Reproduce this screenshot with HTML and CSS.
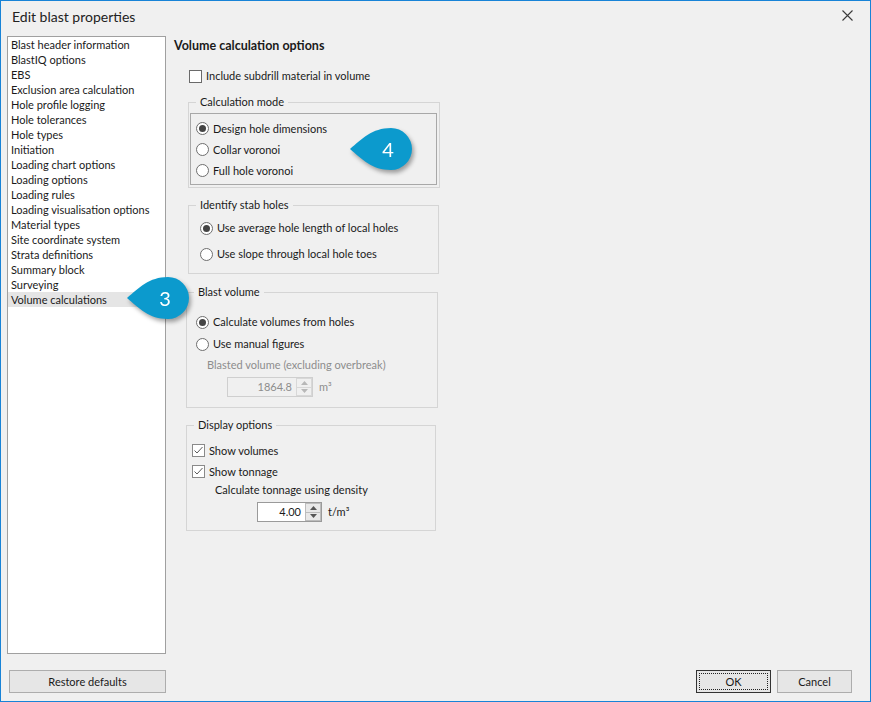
FILE: index.html
```html
<!DOCTYPE html>
<html lang="en">
<head>
    <meta charset="UTF-8">
    <title>Edit blast properties</title>
    <link rel="stylesheet" href="styles.css">
</head>
<body>
<div class="window">
    <header class="titlebar">
        <span class="title">Edit blast properties</span>
        <svg class="close-icon" width="11" height="11" viewBox="0 0 11 11">
            <path d="M0.5 0.5L10.5 10.5M10.5 0.5L0.5 10.5" stroke="#3a3a3a" stroke-width="1.1" fill="none"/>
        </svg>
    </header>

    <div class="layout">
        <!-- Property pages -->
        <ul class="nav-list">
            <li>Blast header information</li>
            <li>BlastIQ options</li>
            <li>EBS</li>
            <li>Exclusion area calculation</li>
            <li>Hole profile logging</li>
            <li>Hole tolerances</li>
            <li>Hole types</li>
            <li>Initiation</li>
            <li>Loading chart options</li>
            <li>Loading options</li>
            <li>Loading rules</li>
            <li>Loading visualisation options</li>
            <li>Material types</li>
            <li>Site coordinate system</li>
            <li>Strata definitions</li>
            <li>Summary block</li>
            <li>Surveying</li>
            <li class="selected">Volume calculations</li>
        </ul>

        <!-- Volume calculations page -->
        <section class="panel">
            <h2 class="panel-title">Volume calculation options</h2>

            <label class="option option-top"><span class="check"></span>Include subdrill material in volume</label>

            <fieldset class="group group-calc">
                <legend>Calculation mode</legend>
                <div class="group-body">
                    <div class="inner-panel">
                        <label class="option row-21"><span class="radio is-on"></span>Design hole dimensions</label>
                        <label class="option row-21"><span class="radio"></span>Collar voronoi</label>
                        <label class="option row-21"><span class="radio"></span>Full hole voronoi</label>
                    </div>
                </div>
            </fieldset>

            <fieldset class="group group-stab">
                <legend>Identify stab holes</legend>
                <div class="group-body">
                    <label class="option row-26"><span class="radio is-on"></span>Use average hole length of local holes</label>
                    <label class="option row-26"><span class="radio"></span>Use slope through local hole toes</label>
                </div>
            </fieldset>

            <fieldset class="group group-volume">
                <legend>Blast volume</legend>
                <div class="group-body">
                    <label class="option row-22"><span class="radio is-on"></span>Calculate volumes from holes</label>
                    <label class="option row-22"><span class="radio"></span>Use manual figures</label>
                    <div class="field-label is-disabled">Blasted volume (excluding overbreak)</div>
                    <div class="spin-row spin-row-volume">
                        <div class="spin is-disabled">
                            <span class="spin-value">1864.8</span>
                            <span class="spin-buttons">
                                <span class="spin-btn"><svg width="7" height="4" viewBox="0 0 7 4"><path d="M0 4L3.5 0L7 4Z"/></svg></span>
                                <span class="spin-btn"><svg width="7" height="4" viewBox="0 0 7 4"><path d="M0 0L3.5 4L7 0Z"/></svg></span>
                            </span>
                        </div>
                        <span class="unit is-disabled">m³</span>
                    </div>
                </div>
            </fieldset>

            <fieldset class="group group-display">
                <legend>Display options</legend>
                <div class="group-body">
                    <label class="option row-21"><span class="check is-on"><svg width="11" height="11" viewBox="0 0 11 11"><path d="M1.5 5.5L4 8L9.5 2" stroke="#5a5a5a" stroke-width="1" fill="none"/></svg></span>Show volumes</label>
                    <label class="option row-21"><span class="check is-on"><svg width="11" height="11" viewBox="0 0 11 11"><path d="M1.5 5.5L4 8L9.5 2" stroke="#5a5a5a" stroke-width="1" fill="none"/></svg></span>Show tonnage</label>
                    <div class="field-label field-density">Calculate tonnage using density</div>
                    <div class="spin-row spin-row-density">
                        <div class="spin spin-density">
                            <span class="spin-value">4.00</span>
                            <span class="spin-buttons">
                                <span class="spin-btn"><svg width="7" height="4" viewBox="0 0 7 4"><path d="M0 4L3.5 0L7 4Z"/></svg></span>
                                <span class="spin-btn"><svg width="7" height="4" viewBox="0 0 7 4"><path d="M0 0L3.5 4L7 0Z"/></svg></span>
                            </span>
                        </div>
                        <span class="unit">t/m³</span>
                    </div>
                </div>
            </fieldset>
        </section>

        <button class="btn btn-restore" type="button">Restore defaults</button>
        <div class="actions">
            <button class="btn btn-default" type="button">OK</button>
            <button class="btn" type="button">Cancel</button>
        </div>
    </div>

    <!-- Step callouts -->
    <div class="callout callout-3">
        <svg width="62" height="42" viewBox="0 0 62 42"><path d="M0 21C12 11 22 0 41 0A21 21 0 0 1 41 42C22 42 12 31 0 21Z"/></svg>
        <span class="callout-num">3</span>
    </div>
    <div class="callout callout-4">
        <svg width="62" height="42" viewBox="0 0 62 42"><path d="M0 21C12 11 22 0 41 0A21 21 0 0 1 41 42C22 42 12 31 0 21Z"/></svg>
        <span class="callout-num">4</span>
    </div>
</div>
</body>
</html>
```

FILE: styles.css
```css
/* Dialog window */
body {
    margin: 0;
    font-family: Lato, "Noto Sans", sans-serif;
    font-size: 11px;
    color: #1a1a1a;
}
.window {
    position: relative;
    width: 871px;
    height: 702px;
    box-sizing: border-box;
    border: 1px solid #1883d7;
    background-color: #f0f0f0;
    display: flex;
    flex-direction: column;
}
.titlebar {
    height: 35px;
    box-sizing: border-box;
    padding: 6px 0 0 11px;
    display: flex;
    justify-content: space-between;
}
.title {
    font-size: 14px;
    line-height: 20px;
    color: #222;
}
.close-icon {
    margin: 3px 17px 0 0;
}
.layout {
    flex: 1;
    display: grid;
    grid-template-columns: 159px 1fr;
    grid-template-rows: 618px 1fr;
    padding: 0 18px 8px 6px;
}

/* Left list */
.nav-list {
    list-style: none;
    margin: 0;
    padding: 0;
    border: 1px solid #a0a0a0;
    background-color: #fff;
}
.nav-list li {
    height: 15px;
    line-height: 15px;
    padding-left: 3px;
    white-space: nowrap;
}
.nav-list li.selected {
    background-color: #e5e5e5;
}

/* Right page */
.panel {
    padding: 2px 0 0 8px;
}
.panel-title {
    margin: 0;
    font-size: 12.5px;
    line-height: 16px;
    font-weight: bold;
}
.option {
    display: flex;
    align-items: center;
    gap: 4px;
    line-height: 16px;
    white-space: nowrap;
}
.option-top {
    margin: 14px 0 0 15px;
}
.row-21 { height: 21px; }
.row-22 { height: 22px; }
.row-26 { height: 26px; }

.check,
.radio {
    width: 13px;
    height: 13px;
    box-sizing: border-box;
    border: 1px solid #6a6a6a;
    background-color: #fff;
    flex: none;
    display: flex;
    align-items: center;
    justify-content: center;
}
.check.is-on {
    border-color: #8a8a8a;
}
.radio {
    border-radius: 50%;
    border-color: #6e6e6e;
}
.radio.is-on::after {
    content: "";
    width: 7px;
    height: 7px;
    border-radius: 50%;
    background-color: #444;
}

/* Group boxes */
.group {
    margin: 0;
    padding: 0;
    border: 1px solid #d5d5d5;
    box-sizing: border-box;
    min-width: 0;
}
.group legend {
    margin-left: 7px;
    padding: 0 4px;
    line-height: 16px;
}
.group-calc {
    margin: 10px 0 0 14px;
    width: 252px;
}
.group-calc .group-body {
    padding: 3px 2px 2px 1px;
}
.inner-panel {
    border: 1px solid #a8a8a8;
    padding: 4px 0 3px 5px;
}
.group-stab {
    margin: 9px 0 0 14px;
    width: 251px;
}
.group-stab .group-body {
    padding: 2px 0 6px 11px;
}
.group-volume {
    margin: 10px 0 0 12px;
    width: 252px;
}
.group-volume .group-body {
    padding: 11px 0 10px 9px;
}
.group-display {
    margin: 9px 0 0 12px;
    width: 250px;
}
.group-display .group-body {
    padding: 7px 0 8px 5px;
}

.field-label {
    height: 20px;
    line-height: 20px;
    margin-left: 11px;
}
.field-density {
    height: 16px;
    line-height: 16px;
    margin-left: 23px;
}
.is-disabled {
    color: #8d8d8d;
}

/* Numeric spin boxes */
.spin-row {
    display: flex;
    align-items: center;
    gap: 6px;
}
.spin-row-volume {
    margin: 2px 0 0 31px;
}
.spin-row-density {
    margin: 4px 0 0 65px;
}
.spin {
    width: 86px;
    height: 20px;
    box-sizing: border-box;
    border: 1px solid #9a9a9a;
    background-color: #fff;
    display: flex;
}
.spin.is-disabled {
    border-color: #cfcfcf;
    background-color: #f0f0f0;
}
.spin-density {
    width: 65px;
}
.spin-value {
    flex: 1;
    text-align: right;
    line-height: 18px;
    padding-right: 4px;
}
.spin-buttons {
    width: 16px;
    display: flex;
    flex-direction: column;
}
.spin-btn {
    flex: 1;
    display: flex;
    align-items: center;
    justify-content: center;
    border: 1px solid #bcbcbc;
    background-color: #e8e8e8;
}
.spin-btn + .spin-btn {
    border-top: none;
}
.spin-btn svg {
    fill: #555;
}
.spin.is-disabled .spin-btn {
    border-color: #d8d8d8;
    background-color: #f0f0f0;
}
.spin.is-disabled .spin-btn svg {
    fill: #b8b8b8;
}
.unit {
    line-height: 16px;
}

/* Buttons */
.btn {
    font-family: inherit;
    font-size: 11px;
    color: #1a1a1a;
    height: 23px;
    padding: 0;
    border: 1px solid #adadad;
    background-color: #e6e6e6;
}
.btn-restore {
    align-self: end;
    width: 157px;
    margin-left: 2px;
}
.actions {
    align-self: end;
    justify-self: end;
    display: flex;
    gap: 6px;
}
.actions .btn {
    width: 75px;
}
.btn-default {
    border-color: #333;
    outline: 1px dotted #222;
    outline-offset: -4px;
}

/* Callouts */
.callout {
    position: absolute;
    width: 62px;
    height: 42px;
    filter: drop-shadow(2px 3px 2px rgba(0, 0, 0, 0.35));
}
.callout svg {
    display: block;
    fill: #0c9acd;
}
.callout-num {
    position: absolute;
    left: 25px;
    top: 0;
    width: 26px;
    text-align: center;
    line-height: 42px;
    font-size: 20px;
    color: #fff;
}
.callout-3 {
    left: 126px;
    top: 276px;
}
.callout-4 {
    left: 349px;
    top: 127px;
}
```
